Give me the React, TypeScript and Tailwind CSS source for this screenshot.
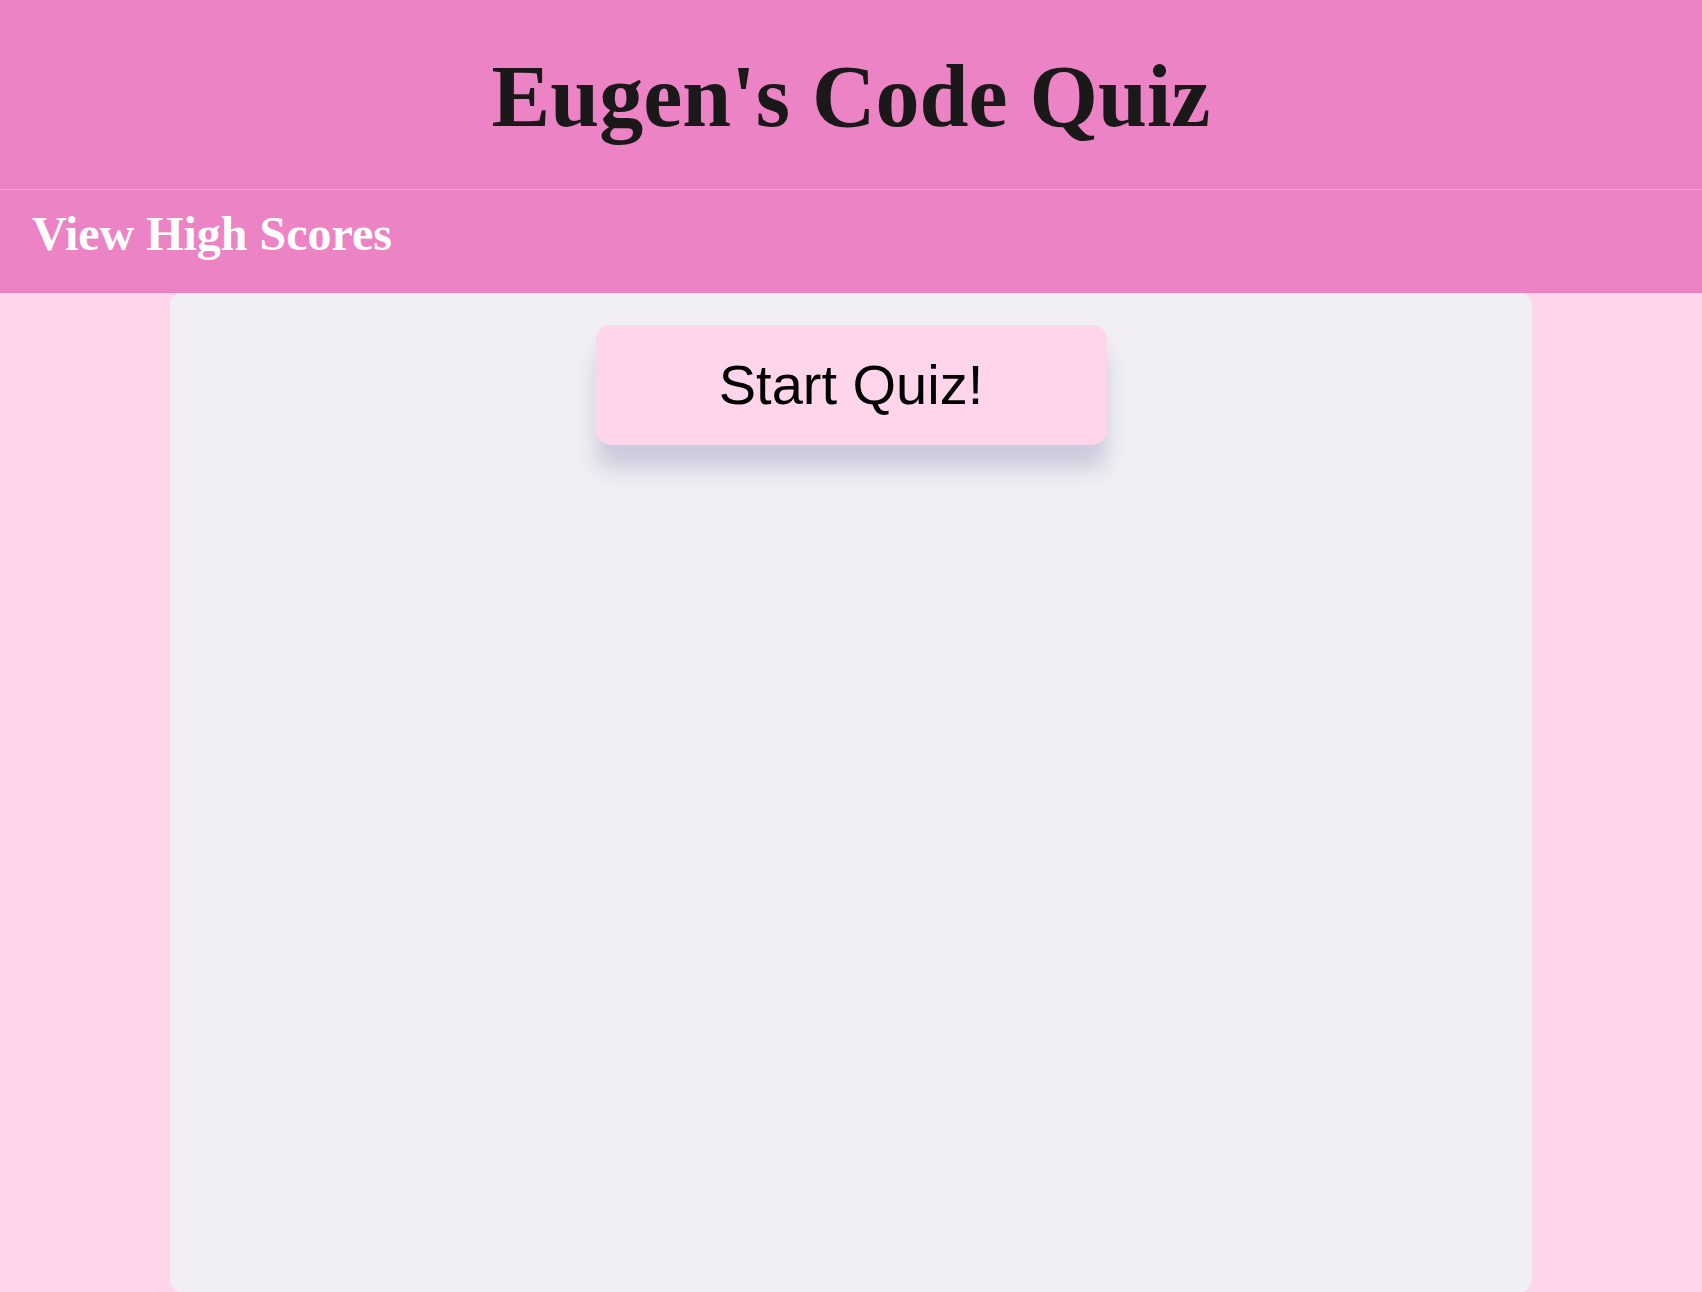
export default function App() {
  return (
    <div className="min-h-screen bg-[#ffd5ec]">
      <header className="flex h-[190px] items-start justify-center bg-[#ec83c4] border-b border-[#f4a3d5]">
        <h1 className="mt-[53px] font-['Liberation_Serif',serif] text-[88px] font-bold leading-none text-[#1b1819]">
          Eugen's Code Quiz
        </h1>
      </header>
      <nav className="flex h-[103px] items-start bg-[#ec83c4] px-[32px] pt-[14px]">
        <a className="font-['Liberation_Serif',serif] text-[48px] font-bold leading-tight text-white" href="#">
          View High Scores
        </a>
      </nav>
      <main className="mx-auto flex h-[999px] w-[80%] flex-col items-center rounded-[12px] bg-[#f1eff4] pt-[32px]">
        <button className="h-[120px] w-[511px] rounded-[15px] bg-[#ffd5ec] font-['Liberation_Sans',sans-serif] text-[56px] leading-none text-black shadow-[0_24px_20px_rgba(180,180,205,0.6)]">
          Start Quiz!
        </button>
      </main>
    </div>
  );
}
